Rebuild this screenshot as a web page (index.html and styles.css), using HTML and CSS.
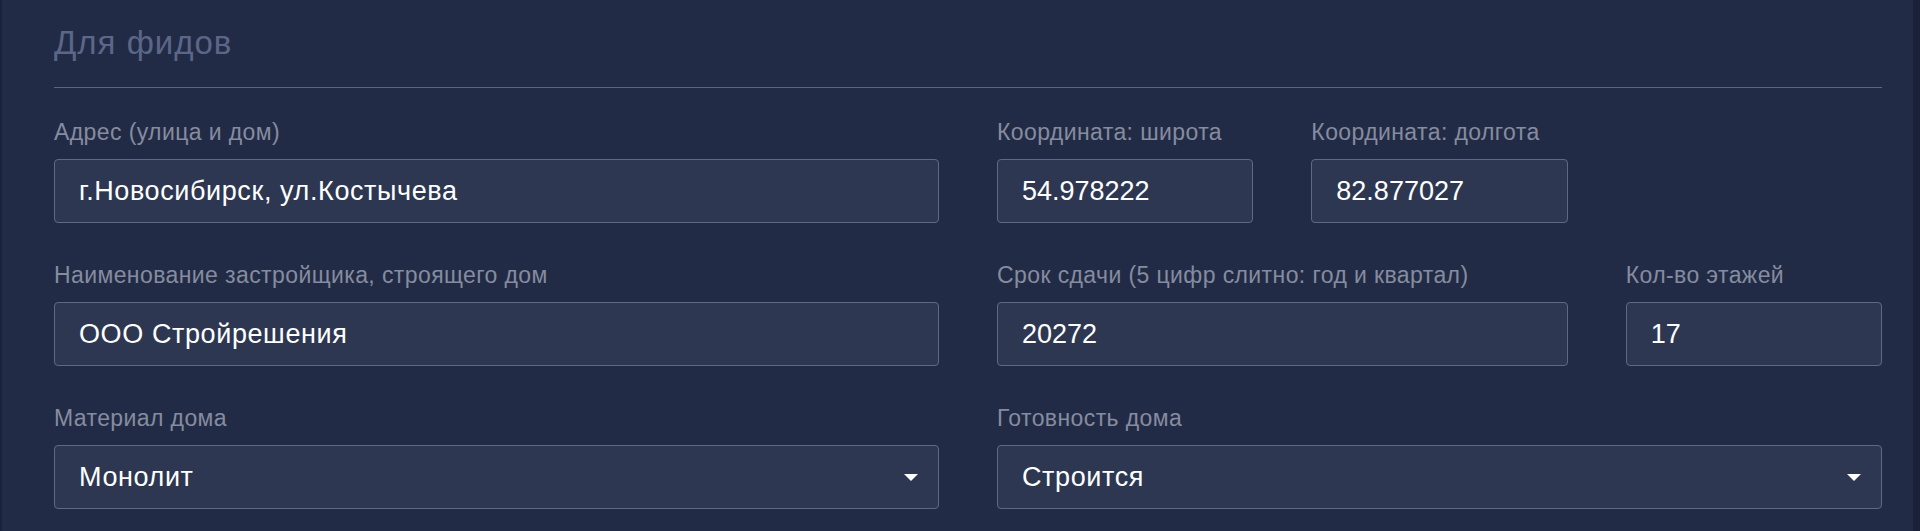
FILE: index.html
```html
<!DOCTYPE html>
<html lang="ru">
<head>
    <meta charset="UTF-8">
    <meta name="viewport" content="width=device-width, initial-scale=1.0">
    <title>Для фидов</title>
    <link rel="stylesheet" href="styles.css">
</head>
<body>
    <div class="panel">
        <h2 class="panel-title">Для фидов</h2>
        <form class="feed-form">
            <div class="form-group span-6">
                <label>Адрес (улица и дом)</label>
                <input type="text" value="г.Новосибирск, ул.Костычева">
            </div>
            <div class="form-group span-2">
                <label>Координата: широта</label>
                <input type="text" class="num" value="54.978222">
            </div>
            <div class="form-group span-2">
                <label>Координата: долгота</label>
                <input type="text" class="num" value="82.877027">
            </div>

            <div class="form-group span-6">
                <label>Наименование застройщика, строящего дом</label>
                <input type="text" value="ООО Стройрешения">
            </div>
            <div class="form-group span-4">
                <label>Срок сдачи (5 цифр слитно: год и квартал)</label>
                <input type="text" class="num" value="20272">
            </div>
            <div class="form-group span-2">
                <label>Кол-во этажей</label>
                <input type="text" class="num" value="17">
            </div>

            <div class="form-group span-6">
                <label>Материал дома</label>
                <div class="select-wrap">
                    <select>
                        <option selected>Монолит</option>
                        <option>Кирпич</option>
                        <option>Панель</option>
                    </select>
                </div>
            </div>
            <div class="form-group span-6">
                <label>Готовность дома</label>
                <div class="select-wrap">
                    <select>
                        <option selected>Строится</option>
                        <option>Сдан</option>
                    </select>
                </div>
            </div>
        </form>
    </div>
</body>
</html>
```

FILE: styles.css
```css
* {
    box-sizing: border-box;
}
body {
    margin: 0;
    font-family: "Liberation Sans", Arial, Helvetica, sans-serif;
    background-color: #1b2139;
}
.panel {
    margin-left: 2px;
    width: 1911px;
    height: 531px;
    overflow: hidden;
    background-color: #222b46;
    padding: 23px 31px 0 52px;
}
.panel-title {
    margin: 0;
    font-size: 33px;
    line-height: 40px;
    font-weight: 400;
    letter-spacing: 1px;
    color: #5c6788;
    padding-bottom: 24px;
    border-bottom: 1px solid #5a6584;
}
.feed-form {
    display: grid;
    grid-template-columns: repeat(12, 1fr);
    column-gap: 58px;
    row-gap: 40px;
    padding-top: 32px;
}
.span-6 {
    grid-column: span 6;
}
.span-4 {
    grid-column: span 4;
}
.span-2 {
    grid-column: span 2;
}
.form-group label {
    display: block;
    font-size: 23px;
    line-height: 24px;
    letter-spacing: 0.4px;
    color: #868c9f;
    margin-bottom: 15px;
    white-space: nowrap;
}
input, select {
    display: block;
    width: 100%;
    height: 64px;
    padding: 0 24px;
    border: 1px solid #5f6987;
    border-radius: 4px;
    background-color: #2e3752;
    color: #ffffff;
    font-family: inherit;
    font-size: 27px;
    letter-spacing: 0.6px;
    outline: none;
}
input.num {
    letter-spacing: 0;
}
select {
    appearance: none;
    -webkit-appearance: none;
}
.select-wrap {
    position: relative;
}
.select-wrap::after {
    content: "";
    position: absolute;
    right: 21px;
    top: 29px;
    border-left: 7px solid transparent;
    border-right: 7px solid transparent;
    border-top: 7px solid #ffffff;
    pointer-events: none;
}
```
